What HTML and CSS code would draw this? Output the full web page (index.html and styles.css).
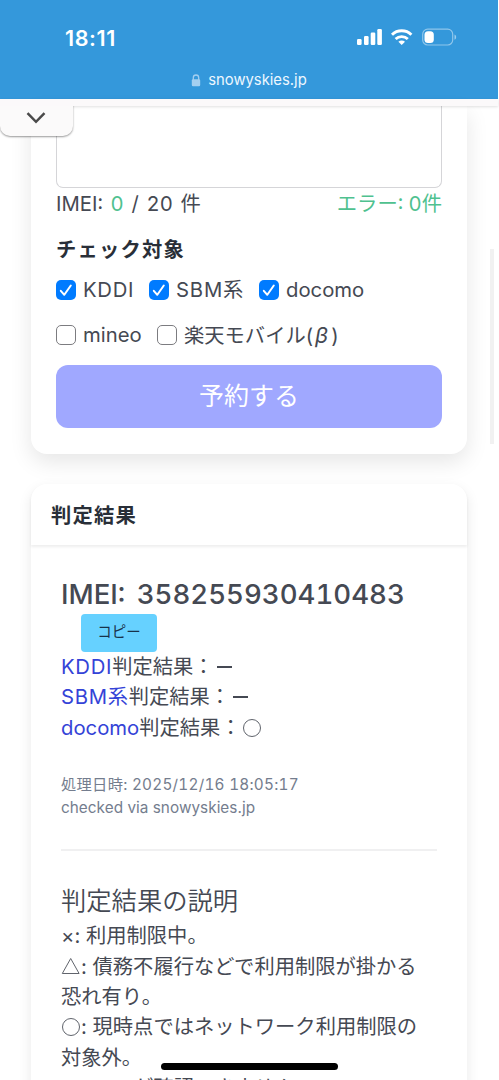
FILE: index.html
```html
<!DOCTYPE html>
<html lang="ja">
<head>
<meta charset="utf-8">
<title>snowyskies.jp</title>
<link rel="stylesheet" href="styles.css">
</head>
<body>
<div class="screen">
  <header class="browser">
    <div class="status">
      <span class="clock">18:11</span>
      <svg class="status-icons" width="102" height="20" viewBox="0 0 102 20">
        <g fill="#fff">
          <rect x="1" y="12" width="4.6" height="6" rx="1.2"/>
          <rect x="8" y="9" width="4.6" height="9" rx="1.2"/>
          <rect x="14.7" y="5.5" width="4.6" height="12.5" rx="1.2"/>
          <rect x="21.3" y="2" width="4.6" height="16" rx="1.2"/>
          <path d="M45.7 18l-3.3-3.3c1.9-1.7 4.7-1.7 6.600 0z"/>
        </g>
        <g fill="none" stroke="#fff" stroke-width="2.9">
          <path d="M36 7.7c5.3-5.2 14.1-5.2 19.4 0"/>
          <path d="M39.6 12c3.4-3.2 8.8-3.2 12.2 0"/>
        </g>
        <rect x="66.7" y="2.2" width="30" height="15.8" rx="5" fill="none" stroke="#fff" stroke-opacity=".45" stroke-width="1.2"/>
        <rect x="68.5" y="4.2" width="9.3" height="11.8" rx="3.5" fill="#fff"/>
        <path d="M98.5 7.5c2.2.8 2.2 4.4 0 5.2z" fill="#fff" fill-opacity=".5"/>
      </svg>
    </div>
    <div class="address">
      <svg width="10" height="13" viewBox="0 0 10 13"><path d="M2.3 6V3.7a2.7 2.7 0 0 1 5.4 0V6" fill="none" stroke="#a4cff0" stroke-width="1.3"/><rect x=".8" y="5.3" width="8.4" height="7" rx="1.3" fill="#a4cff0"/></svg>
      <span>snowyskies.jp</span>
    </div>
  </header>
  <div class="strip"></div>
  <div class="tab"><svg width="20" height="12" viewBox="0 0 20 12"><path d="M1.5 1.2L10 9.8l8.5-8.6" fill="none" stroke="#4a4a4a" stroke-width="2.5"/></svg></div>
  <div class="scrollbar"></div>

  <main class="page">
    <section class="card form">
      <div class="textarea"></div>
      <div class="counts"><span class="count">IMEI: <span class="green">0</span> / 20 件</span><span class="green">エラー: 0件</span></div>
      <h2 class="subject">チェック対象</h2>
      <div class="checks">
        <label class="check kddi"><span class="box on"><svg width="20" height="20" viewBox="0 0 20 20"><path d="M4.8 10.8l3.5 4L14.8 5.5"/></svg></span><span>KDDI</span></label>
        <label class="check sbm"><span class="box on"><svg width="20" height="20" viewBox="0 0 20 20"><path d="M4.8 10.8l3.5 4L14.8 5.5"/></svg></span><span>SBM系</span></label>
        <label class="check"><span class="box on"><svg width="20" height="20" viewBox="0 0 20 20"><path d="M4.8 10.8l3.5 4L14.8 5.5"/></svg></span><span>docomo</span></label>
      </div>
      <div class="checks second">
        <label class="check mineo"><span class="box"></span><span>mineo</span></label>
        <label class="check"><span class="box"></span><span>楽天モバイル(<i class="beta">β</i>)</span></label>
      </div>
      <div class="submit">予約する</div>
    </section>

    <section class="card result">
      <h2 class="result-head">判定結果</h2>
      <div class="result-body">
        <div class="imei">IMEI: 358255930410483</div>
        <div class="copy">コピー</div>
        <div class="line"><a class="wide">KDDI</a>判定結果<span class="colon">：</span><span class="dash"></span></div>
        <div class="line"><a class="wide">SBM系</a>判定結果<span class="colon">：</span><span class="dash"></span></div>
        <div class="line"><a>docomo</a>判定結果<span class="colon">：</span><span class="circle"></span></div>
        <div class="meta"><div class="date">処理日時: 2025/12/16 18:05:17</div><div>checked via snowyskies.jp</div></div>
        <hr class="rule">
        <h3 class="explain">判定結果の説明</h3>
        <div class="line"><span class="cross">×</span>: 利用制限中。</div>
        <div class="line"><svg class="triangle" width="20" height="18" viewBox="0 0 20 18"><path d="M1.3 16.5L9.7 1.5l8.4 15z"/></svg>: 債務不履行などで利用制限が掛かる</div>
        <div class="line">恐れ有り。</div>
        <div class="line"><span class="circle"></span>: 現時点ではネットワーク利用制限の</div>
        <div class="line">対象外。</div>
        <div class="line"><span class="dash"></span>: IMEIが確認できませんで</div>
      </div>
    </section>
  </main>
  <div class="home"></div>
</div>
</body>
</html>
```
FILE: styles.css
```css
* { box-sizing: border-box; }
body { margin: 0; background: #fff; }
h2, h3 { margin: 0; }
.screen { position: relative; width: 499px; height: 1080px; overflow: hidden; background: #fff; color: #454953; font: 375 20.3px/30.4px Inter, "Noto Sans CJK JP", sans-serif; white-space: nowrap; }
.browser { width: 498px; height: 99px; background: #3498db; color: #fff; }
.status { display: flex; justify-content: space-between; align-items: flex-start; height: 70px; padding: 27px 40px 0 65px; }
.clock { font-size: 21.5px; line-height: 22px; font-weight: 580; letter-spacing: .6px; }
.address { display: flex; justify-content: center; align-items: center; gap: 7px; height: 20px; font-size: 14.8px; line-height: 20px; font-weight: 400; color: #edf7ff; }
.strip { position: relative; z-index: 2; width: 498px; height: 7px; background: #fbf9fa; box-shadow: 0 1px 3px rgba(0,0,0,.12); }
.tab { position: absolute; z-index: 3; left: 0; top: 100px; width: 73px; height: 36px; padding: 12px 0 0 26px; line-height: 0; background: #fbfafa; border-radius: 0 0 10px 10px; box-shadow: 0 1px 2px rgba(0,0,0,.4); clip-path: inset(6px -4px -4px -4px); }
.scrollbar { position: absolute; left: 490px; top: 249px; width: 4px; height: 195px; background: #f1f1f1; }
.page { width: 436px; margin-left: 31px; }
.card { background: #fff; border-radius: 16px; box-shadow: 0 8px 22px rgba(0,0,0,.1); }
.form { height: 348px; padding: 0 25px; border-radius: 0 0 16px 16px; }
.textarea { height: 81.5px; width: 386px; border: 1px solid #d5d5d8; border-top: 0; border-radius: 0 0 7px 7px; }
.counts { display: flex; justify-content: space-between; height: 30px; line-height: 31px; font-variant-numeric: tabular-nums; }
.count { word-spacing: 2.3px; }
.green { color: #4fc18f; }
.subject { height: 30px; margin-top: 16px; font-size: 20.3px; line-height: 32px; font-weight: 600; color: #292f38; letter-spacing: 1.2px; }
.checks { display: flex; height: 30px; margin-top: 11px; line-height: 30px; }
.second { margin-top: 15.5px; }
.check { display: flex; align-items: center; gap: 7px; }
.kddi { width: 93px; letter-spacing: .7px; }
.sbm { width: 110px; letter-spacing: .8px; }
.mineo { width: 101px; }
.beta { display: inline-block; margin: 0 3px 0 2px; font-size: 22px; }
.box { width: 20px; height: 20px; flex: none; border: 1.5px solid #7c7c80; border-radius: 5px; }
.on { border: 0; background: #007bff; line-height: 0; letter-spacing: 0; }
.on path { fill: none; stroke: #fff; stroke-width: 2; stroke-linecap: round; stroke-linejoin: round; }
.submit { height: 63px; margin-top: 15px; border-radius: 12px; background: #a0a8ff; color: #fff; font-size: 25px; line-height: 63px; text-align: center; }
.result { margin-top: 30px; height: 700px; box-shadow: 0 5px 14px rgba(0,0,0,.09); }
.result-head { height: 61px; padding-left: 20px; border-radius: 16px 16px 0 0; font-size: 20.3px; line-height: 63px; font-weight: 600; letter-spacing: 1.2px; color: #292f38; box-shadow: 0 2px 3px rgba(0,0,0,.07); }
.result-body { padding: 29px 30px 0; }
.imei { height: 40px; font-size: 27.6px; line-height: 41px; font-weight: 480; font-variant-numeric: tabular-nums; word-spacing: 4px; }
.copy { width: 76px; height: 37.5px; margin: 0 0 .5px 20px; border-radius: 4px; background: #66d1ff; color: #18324a; font-size: 14.5px; line-height: 35px; text-align: center; }
.line { height: 30.4px; }
a { color: #3443d7; }
.wide { letter-spacing: .7px; }
.colon { display: inline-block; margin-right: 1px; line-height: 20px; }
.dash { display: inline-block; width: 15px; height: 2px; margin: 0 2px 6px; background: currentColor; vertical-align: baseline; }
.circle { display: inline-block; width: 18px; height: 18px; margin: 0 1px; border: 1px solid #60646c; border-radius: 50%; vertical-align: -2px; }
.triangle { vertical-align: -1px; }
.triangle path { fill: none; stroke: #60646c; }
.meta { margin-top: 30px; color: #747d8e; font-size: 15.3px; line-height: 23px; }
.meta > div { letter-spacing: .04px; }
.meta > .date { font-variant-numeric: tabular-nums; letter-spacing: .25px; }
.rule { height: 2px; margin: 30px 0 32px; border: 0; background: #f0f0f1; }
.explain { height: 38px; font-size: 25.3px; line-height: 36px; font-weight: 350; }
.home { position: absolute; z-index: 4; left: 161px; top: 1063px; width: 177px; height: 7px; border-radius: 4px; background: #000; }
```
